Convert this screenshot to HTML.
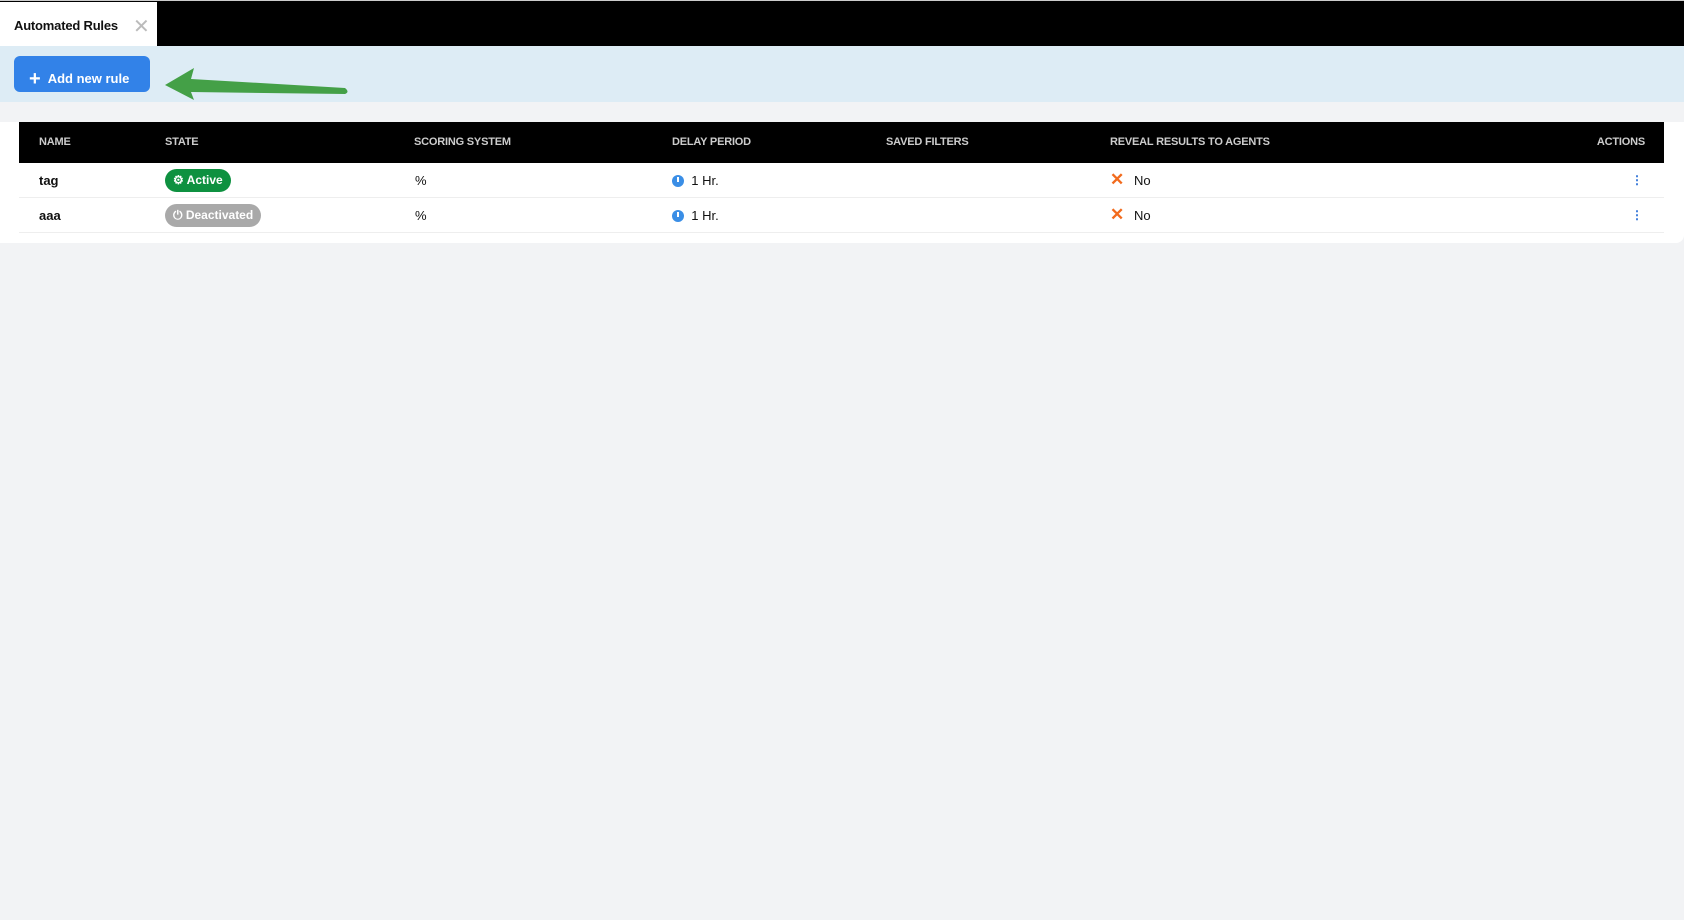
<!DOCTYPE html>
<html><head><style>
*{margin:0;padding:0;box-sizing:border-box}
body{width:1684px;height:920px;background:#f2f3f5;font-family:"Liberation Sans",Arial,sans-serif;position:relative;overflow:hidden}
.top{position:absolute;left:0;top:0;width:1684px;height:46px;background:#000;border-top:1px solid #ccc}
.tab{position:absolute;left:0;top:1px;width:157px;height:45px;background:#fff;font-weight:bold;font-size:13px;color:#111;padding:16px 0 0 14px;letter-spacing:-0.2px}
.tab .x{position:absolute;left:133px;top:12px;color:#bbb;font-size:20px;font-weight:normal}
.band{position:absolute;left:0;top:46px;width:1684px;height:56px;background:#ddecf5}
.btn{position:absolute;left:14px;top:56px;width:136px;height:36px;background:#3282e8;border-radius:6px;color:#fff;font-size:13px;font-weight:bold;padding:10px 0 0 15px}
.btn b{font-size:20px;position:relative;top:2px;margin-right:7px}
.card{position:absolute;left:0;top:122px;width:1684px;height:121px;background:#fff;border-radius:0 0 8px 0}
.thead{position:absolute;left:19px;top:122px;width:1645px;height:41px;background:#000;color:#ccc;font-size:11px;font-weight:bold;letter-spacing:-0.2px}
.thead span,.row span{position:absolute}
.thead span{top:14px}
.row{position:absolute;left:19px;width:1645px;height:35px;background:#fff;border-bottom:1px solid #eee;font-size:13px;color:#111}
.row span{top:10px}
.pill{position:absolute;top:6px!important;height:23px;border-radius:12px;color:#fff;font-size:12px;font-weight:bold;padding:4px 8px}
.dot{display:inline-block;width:12px;height:12px;border-radius:50%;background:#3a8ee6;vertical-align:-2px;position:relative}
.dot:after{content:"";position:absolute;left:5px;top:2px;width:2px;height:5px;background:#fff}
.xo{color:#f26b1d;font-weight:bold;font-size:17px;top:7px!important}
.dots{color:#2a6fd6;font-weight:bold;font-size:12px}
</style></head><body>
<div class="top"><div class="tab">Automated Rules<span class="x">✕</span></div></div>
<div class="band"></div>
<div class="btn"><b>+</b>Add new rule</div>
<svg style="position:absolute;left:160px;top:64px" width="195" height="40"><g fill="#44a047"><path d="M5 21 L34 4 L31 15 L185 24 Q190 28 185 30 L31 28 L34 36 Z"/></g></svg>
<div class="card"></div>
<div class="thead">
<span style="left:20px">NAME</span><span style="left:146px">STATE</span><span style="left:395px">SCORING SYSTEM</span><span style="left:653px">DELAY PERIOD</span><span style="left:867px">SAVED FILTERS</span><span style="left:1091px">REVEAL RESULTS TO AGENTS</span><span style="right:19px">ACTIONS</span>
</div>
<div class="row" style="top:163px">
<span style="left:20px;font-weight:bold">tag</span>
<span class="pill" style="left:146px;background:#0e9140">⚙ Active</span>
<span style="left:396px">%</span>
<span style="left:653px"><i class="dot"></i>&nbsp;&nbsp;1 Hr.</span>
<span class="xo" style="left:1091px">✕</span><span style="left:1115px">No</span>
<span class="dots" style="left:1612px">⋮</span>
</div>
<div class="row" style="top:198px">
<span style="left:20px;font-weight:bold">aaa</span>
<span class="pill" style="left:146px;background:#a9a9a9">⏻ Deactivated</span>
<span style="left:396px">%</span>
<span style="left:653px"><i class="dot"></i>&nbsp;&nbsp;1 Hr.</span>
<span class="xo" style="left:1091px">✕</span><span style="left:1115px">No</span>
<span class="dots" style="left:1612px">⋮</span>
</div>
</body></html>
